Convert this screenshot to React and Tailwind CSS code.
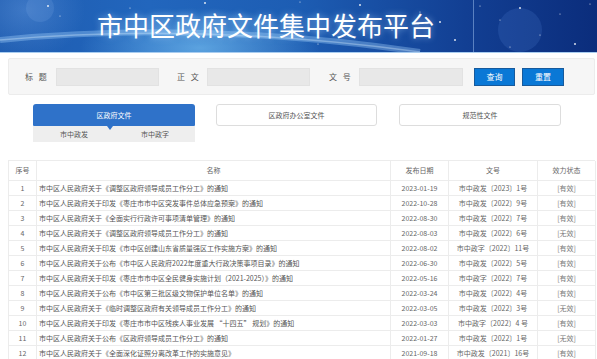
import React from "react";

const rows = [
  ["1", "市中区人民政府关于《调整区政府领导成员工作分工》的通知", "2023-01-19", "市中政发〔2023〕1号", "[有效]"],
  ["2", "市中区人民政府关于印发《枣庄市市中区突发事件总体应急预案》的通知", "2022-10-28", "市中政发〔2022〕9号", "[有效]"],
  ["3", "市中区人民政府关于《全面实行行政许可事项清单管理》的通知", "2022-08-30", "市中政发〔2022〕7号", "[有效]"],
  ["4", "市中区人民政府关于《调整区政府领导成员工作分工》的通知", "2022-08-03", "市中政发〔2022〕6号", "[无效]"],
  ["5", "市中区人民政府关于印发《市中区创建山东省质量强区工作实施方案》的通知", "2022-08-02", "市中政字〔2022〕11号", "[有效]"],
  ["6", "市中区人民政府关于公布《市中区人民政府2022年度重大行政决策事项目录》的通知", "2022-06-30", "市中政发〔2022〕5号", "[有效]"],
  ["7", "市中区人民政府关于印发《枣庄市市中区全民健身实施计划（2021-2025）》的通知", "2022-05-16", "市中政字〔2022〕7号", "[有效]"],
  ["8", "市中区人民政府关于公布《市中区第三批区级文物保护单位名单》的通知", "2022-03-24", "市中政发〔2022〕4号", "[有效]"],
  ["9", "市中区人民政府关于《临时调整区政府有关领导成员工作分工》的通知", "2022-03-05", "市中政发〔2022〕3号", "[无效]"],
  ["10", "市中区人民政府关于印发《枣庄市市中区残疾人事业发展 “十四五” 规划》的通知", "2022-03-03", "市中政字〔2022〕4 号", "[有效]"],
  ["11", "市中区人民政府关于公布《区政府领导成员工作分工》的通知", "2022-01-27", "市中政发〔2022〕1号", "[无效]"],
  ["12", "市中区人民政府关于《全面深化证照分离改革工作的实施意见》", "2021-09-18", "市中政发〔2021〕16号", "[有效]"],
];

const stars = [
  [48, 6], [60, 16], [130, 8], [205, 3], [300, 2], [318, 44], [360, 5], [392, 30], [420, 12], [455, 40],
  [480, 6], [500, 20], [520, 8], [540, 35], [560, 14], [575, 44], [590, 4], [510, 47], [440, 22], [345, 35],
];

function Banner() {
  return (
    <div className="relative h-[52px] overflow-hidden bg-[linear-gradient(90deg,#1e5cb0_0%,#2266bd_25%,#1d5db3_50%,#123f93_78%,#0b2d7c_100%)]">
      <div className="absolute inset-0 bg-[radial-gradient(ellipse_120px_40px_at_200px_48px,rgba(140,215,255,0.55),rgba(140,215,255,0)_100%)]" />
      <div className="absolute inset-0 bg-[radial-gradient(ellipse_60px_50px_at_25px_10px,rgba(120,170,235,0.35),rgba(120,170,235,0)_100%)]" />
      <svg className="absolute inset-0" width="597" height="52" viewBox="0 0 597 52">
        <path d="M0 40 Q 200 20 420 52" stroke="rgba(170,215,255,0.35)" strokeWidth="6" fill="none" />
        <path d="M0 40 Q 200 22 420 52" stroke="rgba(220,240,255,0.35)" strokeWidth="1.5" fill="none" />
        <circle cx="520" cy="30" r="22" fill="rgba(90,140,220,0.18)" />
        <circle cx="40" cy="8" r="14" fill="rgba(150,190,240,0.15)" />
        <line x1="473.5" y1="0" x2="473.5" y2="52" stroke="rgba(180,210,250,0.45)" strokeWidth="1" />
        {stars.map(([x, y], i) => (
          <circle key={i} cx={x} cy={y} r={i % 3 === 0 ? 1 : 0.6} fill="#ffffff" opacity="0.85" />
        ))}
      </svg>
      <div className="relative flex h-full items-center pl-[97px] pb-[2px]">
        <span className="text-[26px] leading-none text-white [font-family:'Noto_Sans_CJK_SC',sans-serif] [text-shadow:0_0_6px_rgba(180,220,255,0.6)]">
          市中区政府文件集中发布平台
        </span>
      </div>
    </div>
  );
}

function Label({ children, className = "" }) {
  return (
    <span className={"text-[8px] text-[#555] tracking-[2px] leading-none " + className}>{children}</span>
  );
}

function SearchPanel() {
  return (
    <div className="ml-[8px] mr-[2px] mt-[5px] flex h-[37px] items-center rounded-[2px] border border-[#ececec] bg-[#f6f6f6]">
      <Label className="ml-[16px] w-[31px]">标 题</Label>
      <div className="h-[18px] w-[103px] border border-[#e2e2e2] bg-[#e8e8e8]" />
      <Label className="ml-[18px] w-[30px]">正 文</Label>
      <div className="h-[18px] w-[103px] border border-[#e2e2e2] bg-[#e8e8e8]" />
      <Label className="ml-[19px] w-[30px]">文 号</Label>
      <div className="h-[18px] w-[104px] border border-[#e2e2e2] bg-[#e8e8e8]" />
      <button className="ml-[11px] flex h-[18px] w-[41px] items-center justify-center border border-[#175a9c] bg-[#0a78d6] text-[8px] leading-none text-white">
        查询
      </button>
      <button className="ml-[7px] flex h-[18px] w-[42px] items-center justify-center border border-[#175a9c] bg-[#0a78d6] text-[8px] leading-none text-white">
        重置
      </button>
    </div>
  );
}

function Tabs() {
  return (
    <div className="mt-[9px] flex items-start pl-[33px]">
      <div className="w-[162px]">
        <div className="relative flex h-[22px] items-center justify-center rounded-t-[3px] rounded-b-[1px] bg-[#2f72c9] text-[7px] leading-none text-white">
          区政府文件
          <div className="absolute left-[74px] top-[22px] h-0 w-0 border-x-[3.5px] border-t-[4px] border-x-transparent border-t-[#2f72c9]" />
        </div>
        <div className="flex h-[16px] items-center bg-[#eeeeee] text-[7px] leading-none text-[#555]">
          <span className="ml-[27px]">市中政发</span>
          <span className="ml-[53px]">市中政字</span>
        </div>
      </div>
      <div className="ml-[21px] flex h-[22px] w-[161px] items-center justify-center rounded-[3px] border border-[#dddddd] bg-white text-[7px] leading-none text-[#555]">
        区政府办公室文件
      </div>
      <div className="ml-[22px] flex h-[22px] w-[162px] items-center justify-center rounded-[3px] border border-[#dddddd] bg-white text-[7px] leading-none text-[#555]">
        规范性文件
      </div>
    </div>
  );
}

function Table() {
  const cols = "grid grid-cols-[28px_354px_58px_89px_58px]";
  return (
    <div className="ml-[8px] mt-[18px] w-[587px] border-l border-t border-[#ececec] text-[7px] leading-none text-[#666]">
      <div className={cols + " h-[20px]"}>
        <div className="flex items-center justify-center border-b border-r border-[#ececec]">序号</div>
        <div className="flex items-center justify-center border-b border-r border-[#ececec]">名称</div>
        <div className="flex items-center justify-center border-b border-r border-[#ececec]">发布日期</div>
        <div className="flex items-center justify-center border-b border-r border-[#ececec]">文号</div>
        <div className="flex items-center justify-center border-b border-r border-[#ececec]">效力状态</div>
      </div>
      {rows.map((r) => (
        <div key={r[0]} className={cols + " h-[15px]"}>
          <div className="flex items-center justify-center border-b border-r border-[#ececec]">{r[0]}</div>
          <div className="flex items-center whitespace-nowrap border-b border-r border-[#ececec] pl-[2px] text-[#555]">{r[1]}</div>
          <div className="flex items-center justify-center border-b border-r border-[#ececec]">{r[2]}</div>
          <div className="flex items-center justify-center whitespace-nowrap border-b border-r border-[#ececec]">{r[3]}</div>
          <div className="flex items-center justify-center border-b border-r border-[#ececec] text-[#777]">{r[4]}</div>
        </div>
      ))}
    </div>
  );
}

export default function App() {
  return (
    <div className="h-[359px] w-[597px] overflow-hidden bg-white [font-family:'Noto_Sans_CJK_SC','Noto_Sans',sans-serif]">
      <Banner />
      <div className="h-px bg-[#a9cdf0]" />
      <SearchPanel />
      <Tabs />
      <Table />
    </div>
  );
}
